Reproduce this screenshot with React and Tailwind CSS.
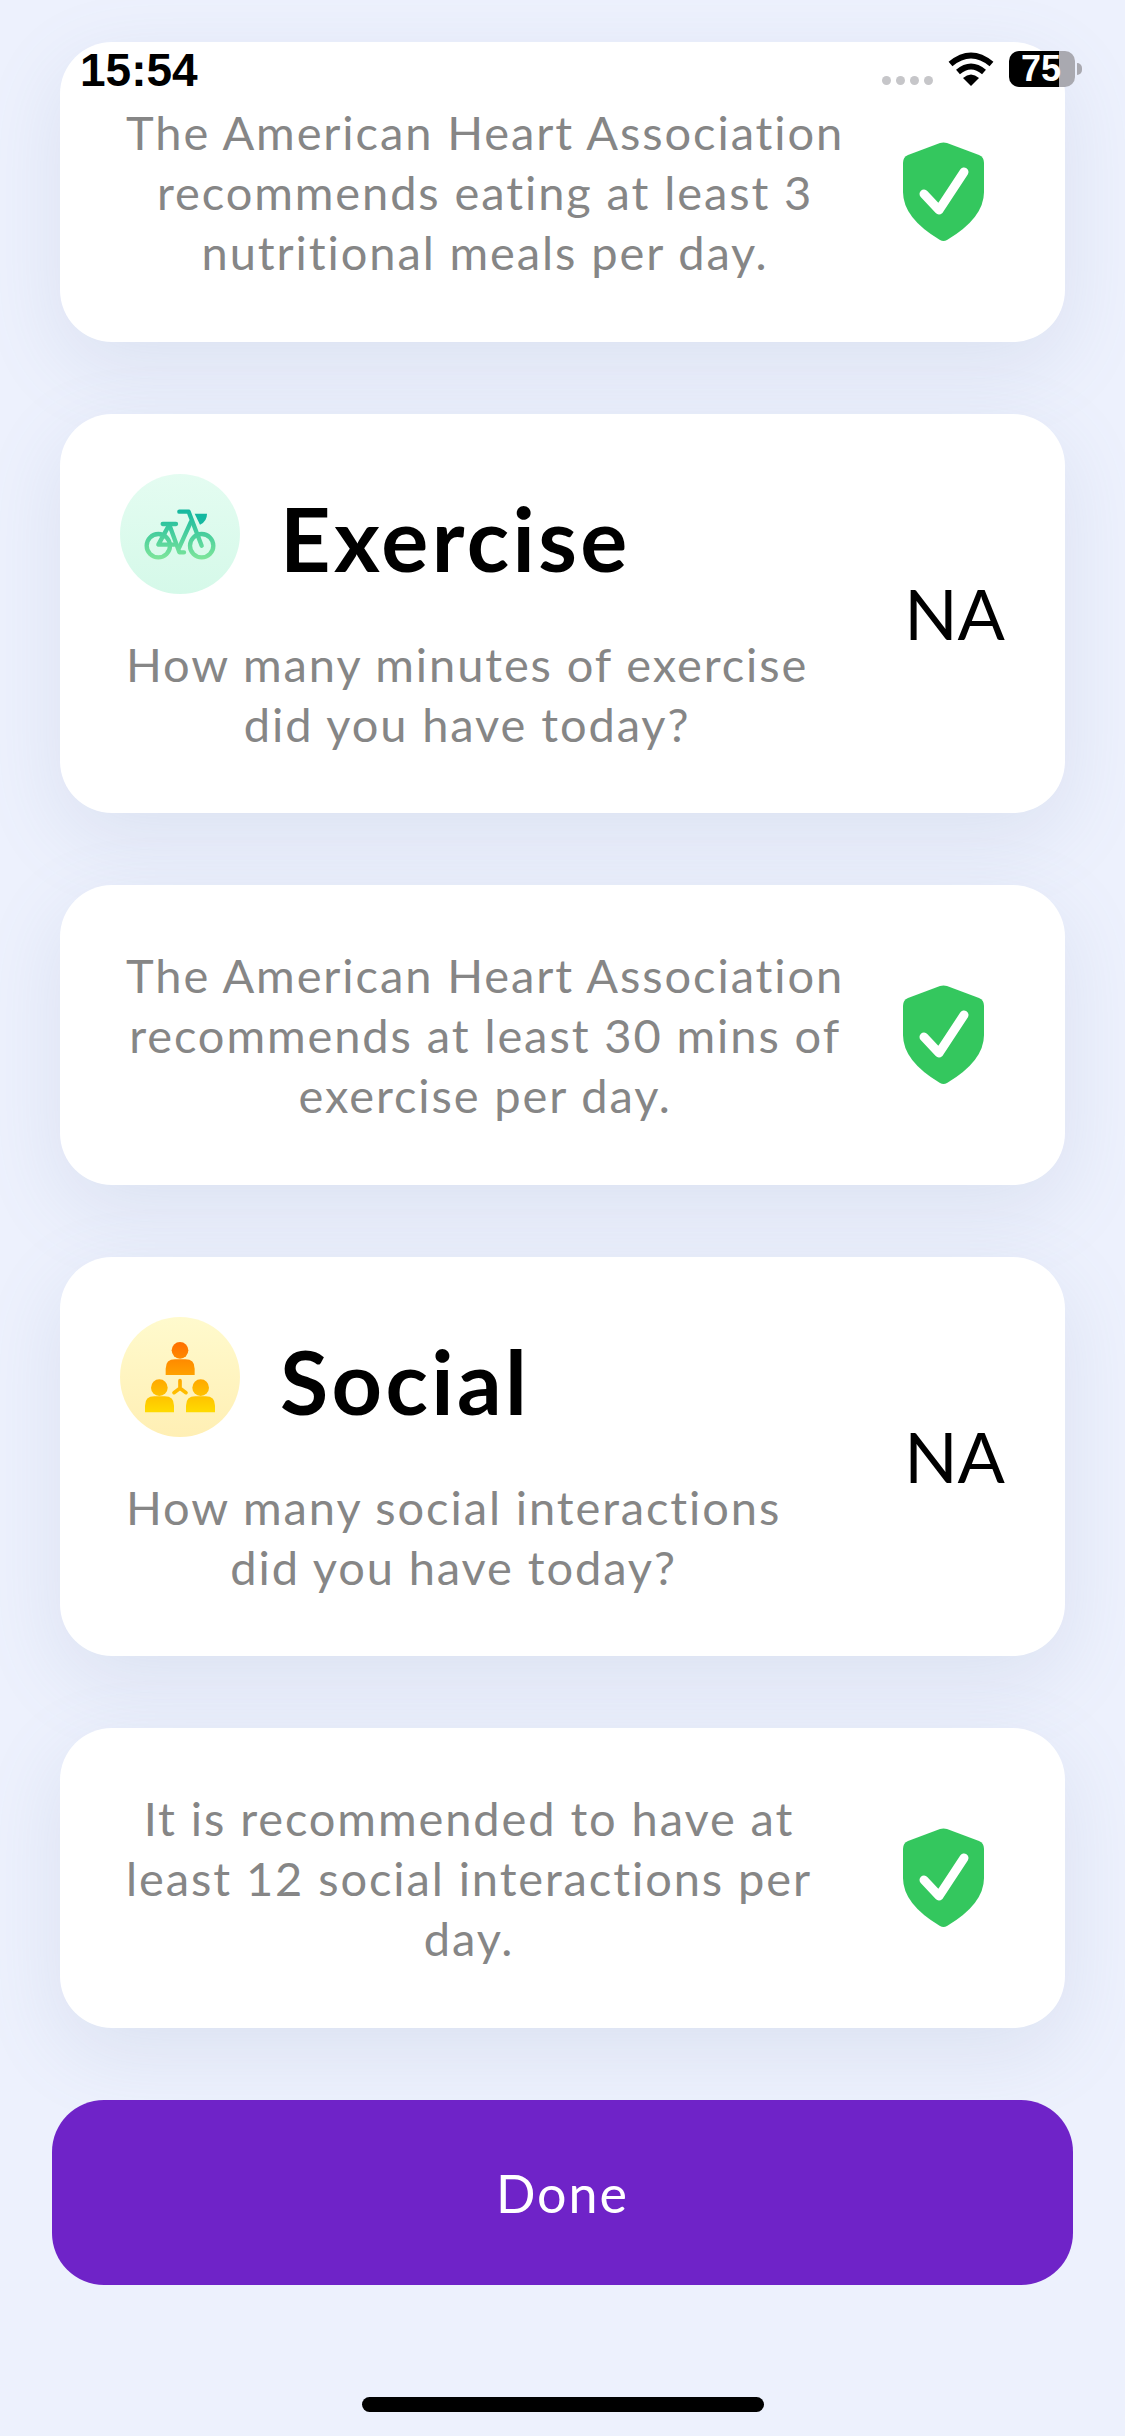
import React from 'react'

const Shield = () => (
  <svg viewBox="0 0 81 99" className="w-[81px] h-[99px] shrink-0 mb-[2px]">
    <path d="M37 1 L5 13 Q0 15 0 21 L0 50 Q0 76 37 98 Q40.5 100 44 98 Q81 76 81 50 L81 21 Q81 15 76 13 L44 1 Q40.5 0 37 1 Z" fill="#34c75e" />
    <path d="M21 52 L36 68 L61 30" fill="none" stroke="#fff" strokeWidth="9" strokeLinecap="round" strokeLinejoin="round" />
  </svg>
)

const BikeIcon = () => (
  <svg viewBox="60 70 360 360" className="w-full h-full">
    <defs>
      <linearGradient id="bike" gradientUnits="userSpaceOnUse" x1="0" y1="178" x2="0" y2="328">
        <stop offset="0" stopColor="#14b8a0" />
        <stop offset="1" stopColor="#7fe69a" />
      </linearGradient>
    </defs>
    <g fill="none" stroke="url(#bike)" strokeWidth="13" strokeLinecap="round" strokeLinejoin="round">
      <circle cx="175" cy="285" r="35" />
      <circle cx="305" cy="285" r="35" />
      <path d="M238 183 H266 L305 285" />
      <path d="M188 220 H228" />
      <path d="M208 222 L175 282 H222" />
      <path d="M208 222 L238 305 H252" />
      <path d="M272 215 L238 290" />
    </g>
    <path d="M284 189 H321 Q321 212 300 222 Z" fill="#14b8a0" />
  </svg>
)

const SocialIcon = () => (
  <svg viewBox="60 50 360 360" className="w-full h-full">
    <defs>
      <linearGradient id="people" gradientUnits="userSpaceOnUse" x1="0" y1="125" x2="0" y2="336">
        <stop offset="0" stopColor="#ff6f00" />
        <stop offset="1" stopColor="#ffdb00" />
      </linearGradient>
    </defs>
    <g fill="url(#people)">
      <circle cx="240" cy="150" r="25" />
      <path d="M197 224 V205 Q197 177 225 177 H256 Q284 177 284 205 V224 Z" />
      <circle cx="178" cy="262" r="25" />
      <path d="M135 336 V316 Q135 288 163 288 H194 Q222 288 222 316 V336 Z" />
      <circle cx="302" cy="262" r="25" />
      <path d="M258 336 V316 Q258 288 286 288 H317 Q345 288 345 316 V336 Z" />
    </g>
    <path d="M240 241 V264 M222 277 L240 264 L258 277" fill="none" stroke="url(#people)" strokeWidth="11" strokeLinecap="round" strokeLinejoin="round" />
  </svg>
)

const cardClass = 'mx-2 bg-white rounded-[52px] shadow-[0_24px_80px_rgba(110,135,170,0.14)] flex items-center justify-between'
const bodyClass = "text-[#868686] text-[47px] leading-[60px] text-center tracking-[1.9px] font-['Lato',sans-serif]"

const TipCard = ({ lines, height }) => (
  <div className={`${cardClass} ${height} pl-[66px] pr-[81px]`}>
    <p className={bodyClass}>
      {lines.map((l, i) => (
        <React.Fragment key={i}>
          {l}
          {i < lines.length - 1 && <br />}
        </React.Fragment>
      ))}
    </p>
    <Shield />
  </div>
)

const QuestionCard = ({ title, icon, circle, lines }) => (
  <div className={`${cardClass} h-[399px] pl-[60px] pr-[60px]`}>
    <div className="flex flex-col">
      <div className="flex items-center gap-[40px]">
        <div className={`w-[120px] h-[120px] rounded-full ${circle}`}>{icon}</div>
        <h2 className="text-[88px] leading-none pt-[8px] font-bold tracking-[3.4px] text-black font-['Lato',sans-serif]">{title}</h2>
      </div>
      <p className={`${bodyClass} mt-[40px] ml-[6px] w-fit`}>
        {lines[0]}
        <br />
        {lines[1]}
      </p>
    </div>
    <span className="text-[70px] leading-none text-black mb-[2px] font-['Lato',sans-serif]">NA</span>
  </div>
)

export default function App() {
  return (
    <div className="relative w-[1125px] h-[2436px] overflow-hidden bg-[#edf1fd]">
      {/* Status bar */}
      <div className="absolute top-0 left-0 right-0 h-[100px] z-10">
        <span className="absolute left-[80px] top-[42px] text-[46px] leading-[56px] font-bold text-black font-['Liberation_Sans',sans-serif]">15:54</span>
        <div className="absolute left-[882px] top-[76px] flex gap-[5px]">
          <span className="w-[9px] h-[9px] rounded-full bg-[#c6c6c9]" />
          <span className="w-[9px] h-[9px] rounded-full bg-[#c6c6c9]" />
          <span className="w-[9px] h-[9px] rounded-full bg-[#c6c6c9]" />
          <span className="w-[9px] h-[9px] rounded-full bg-[#c6c6c9]" />
        </div>
        <svg viewBox="0 0 46 34" className="absolute left-[948px] top-[52px] w-[46px] h-[34px]">
          <path d="M2.5 12 Q23 -5 43.5 12" fill="none" stroke="#000" strokeWidth="6" />
          <path d="M10 20 Q23 9 36 20" fill="none" stroke="#000" strokeWidth="6" />
          <path d="M15 26 Q23 19 31 26 L23 34 Z" fill="#000" />
        </svg>
        <div className="absolute left-[1009px] top-[51px] w-[66px] h-[36px] flex">
          <div className="w-[50px] h-full bg-black rounded-l-[10px]" />
          <div className="w-[16px] h-full bg-[#a9a9b0] rounded-r-[10px]" />
          <span className="absolute left-[12px] top-0 text-[36px] leading-[36px] font-bold text-white font-['Liberation_Sans',sans-serif]">75</span>
        </div>
        <div className="absolute left-[1077px] top-[63px] w-[5px] h-[12px] rounded-r-full bg-[#a9a9b0]" />
      </div>

      <div className="flex flex-col gap-[72px] pt-[42px] px-[52px]">
        <TipCard
          height="h-[300px]"
          lines={['The American Heart Association', 'recommends eating at least 3', 'nutritional meals per day.']}
        />
        <QuestionCard
          title="Exercise"
          circle="bg-gradient-to-b from-[#e4fcf1] to-[#d5f9e9]"
          icon={<BikeIcon />}
          lines={['How many minutes of exercise', 'did you have today?']}
        />
        <TipCard
          height="h-[300px]"
          lines={['The American Heart Association', 'recommends at least 30 mins of', 'exercise per day.']}
        />
        <QuestionCard
          title="Social"
          circle="bg-gradient-to-b from-[#fffacd] to-[#ffefb4]"
          icon={<SocialIcon />}
          lines={['How many social interactions', 'did you have today?']}
        />
        <TipCard
          height="h-[300px]"
          lines={['It is recommended to have at', 'least 12 social interactions per', 'day.']}
        />
        <button className="h-[185px] rounded-[52px] bg-[#6f23c8] text-white text-[52px] tracking-[2px] font-['Lato',sans-serif]">
          Done
        </button>
      </div>

      {/* Home indicator */}
      <div className="absolute left-[362px] top-[2397px] w-[402px] h-[15px] rounded-full bg-black" />
    </div>
  )
}
